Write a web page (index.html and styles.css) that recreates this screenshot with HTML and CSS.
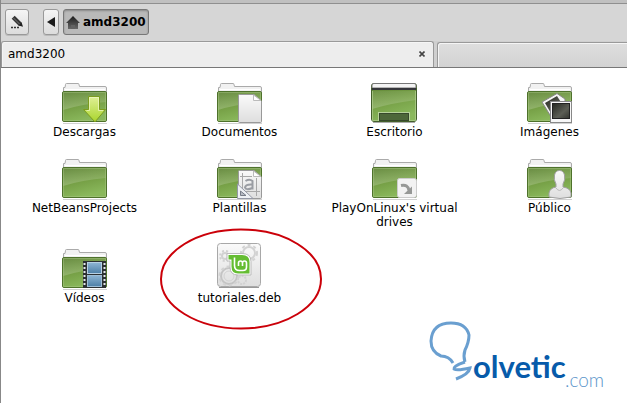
FILE: index.html
```html
<!DOCTYPE html>
<html lang="es">
<head>
<meta charset="utf-8">
<title>amd3200</title>
<link rel="stylesheet" href="styles.css">
</head>
<body>
<svg class="defs" aria-hidden="true">
  <defs>
    <linearGradient id="green" x1="0" y1="0" x2="0.35" y2="1"><stop offset="0" stop-color="#5f8436"/><stop offset="0.55" stop-color="#76a046"/><stop offset="1" stop-color="#8ab85c"/></linearGradient>
    <linearGradient id="shine" x1="0" y1="0" x2="0" y2="1"><stop offset="0" stop-color="#fff" stop-opacity="0.06"/><stop offset="1" stop-color="#fff" stop-opacity="0.2"/></linearGradient>
    <linearGradient id="paper" x1="0" y1="0" x2="0" y2="1"><stop offset="0" stop-color="#fafafa"/><stop offset="1" stop-color="#dedede"/></linearGradient>
    <linearGradient id="arrow" x1="0" y1="0" x2="0" y2="1"><stop offset="0" stop-color="#e0f096"/><stop offset="1" stop-color="#a9d52c"/></linearGradient>
    <linearGradient id="photo" x1="0" y1="0" x2="1" y2="1"><stop offset="0" stop-color="#242620"/><stop offset="0.6" stop-color="#5c5e55"/><stop offset="1" stop-color="#33352f"/></linearGradient>
    <linearGradient id="frame" x1="0" y1="0" x2="0" y2="1"><stop offset="0" stop-color="#8eb5d4"/><stop offset="1" stop-color="#4d7fa6"/></linearGradient>
    <linearGradient id="roof" x1="0" y1="0" x2="0" y2="1"><stop offset="0" stop-color="#1c1c1c"/><stop offset="1" stop-color="#686868"/></linearGradient>
    <symbol id="folder" viewBox="0 0 48 46">
      <path d="M2 44.500h44" stroke="#000" stroke-opacity="0.18"/>
      <path d="M2.500 16V8.500h1.500L4.500 5.500q0-1 1-1H17q1 0 1 1l.5 2H44q1.500 0 1.500 1.500V16z" fill="#f1f1f1" stroke="#aaa"/>
      <path d="M4 10.500h40" stroke="#fff"/>
      <rect x="1.500" y="12.500" width="44" height="30" rx="1.500" fill="url(#green)" stroke="#4e722b"/>
      <path d="M2 13h43v10Q21 25 2 31z" fill="url(#shine)"/>
      <rect x="2.500" y="13.500" width="42" height="28" fill="none" stroke="#b2ce92" stroke-opacity="0.4"/>
    </symbol>
  </defs>
</svg>
<div class="window">
  <header class="toolbar">
    <button class="btn edit" aria-label="Editar ubicación">
      <svg width="14" height="16" viewBox="0 0 14 16"><path d="M3.200 3.200L10.500 10.500" stroke="#333" stroke-width="4.200"/><path d="M3.500 4L10 10.500" stroke="#777" stroke-width="1"/><path d="M8.500 11.500L13 12.800 11.600 8.500z" fill="#222"/><path d="M1 13.500h2m1 0h2m1 0h2" stroke="#333" stroke-width="1.500"/></svg>
    </button>
    <button class="btn back" aria-label="Atrás">
      <svg width="8" height="10" viewBox="0 0 8 10"><path d="M8 0v10L0 5z" fill="#1c1c1c"/></svg>
    </button>
    <button class="btn crumb">
      <svg width="14" height="13" viewBox="0 0 14 13"><path d="M7 0L14 7h-2v6H8.500V9h-3v4H2V7H0z" fill="url(#roof)"/><path d="M5 9h4v4H5z" fill="#626262"/></svg>
      <span>amd3200</span>
    </button>
  </header>
  <nav class="tabs">
    <div class="tab active"><span>amd3200</span><button class="close" aria-label="Cerrar"><svg width="6" height="6" viewBox="0 0 6 6"><path d="M.5.500l5 5m0-5l-5 5" stroke="#444" stroke-width="1.600"/></svg></button></div>
    <div class="tab"></div>
  </nav>
  <main class="files">
    <figure class="item">
      <svg class="icon" viewBox="0 0 48 46"><use href="#folder"/><path d="M27.500 17.500h11v13h6L34 43 22.500 30.500h5z" fill="url(#arrow)" stroke="#7c9c1e"/><path d="M25.500 31.500h3v-13h9v13h4.500" fill="none" stroke="#f0f8c8" stroke-opacity="0.7"/></svg>
      <figcaption>Descargas</figcaption>
    </figure>
    <figure class="item">
      <svg class="icon" viewBox="0 0 48 46"><use href="#folder"/><path d="M22.500 16.500q0-1 1-1H38L45.500 22v20.500q0 1-1 1h-21q-1 0-1-1z" fill="url(#paper)" stroke="#999"/><path d="M37.500 16v5.500H45z" fill="#fff" stroke="#bbb"/></svg>
      <figcaption>Documentos</figcaption>
    </figure>
    <figure class="item">
      <svg class="icon" viewBox="1 0 48 46"><path d="M3 43.500h42" stroke="#aaa"/><rect x="1.500" y="4.500" width="45" height="38" rx="2.500" fill="url(#green)" stroke="#44602c"/><path d="M2 9V6q0-1.500 2-1.500h40q2 0 2 1.500v3z" fill="#f4f4f4" stroke="#777"/><path d="M2 10h44" stroke="#35363a" stroke-width="2"/><path d="M2 12h44v9Q22 24 2 30z" fill="url(#shine)"/><path d="M2.500 12v29.500h43V12" fill="none" stroke="#b2ce92" stroke-opacity="0.7"/><rect x="8.500" y="33.500" width="31" height="8" fill="#4d673a" stroke="#b7d29a"/><rect x="9.500" y="34.500" width="29" height="7" fill="none" stroke="#37492c"/></svg>
      <figcaption>Escritorio</figcaption>
    </figure>
    <figure class="item">
      <svg class="icon" viewBox="0 0 48 46"><use href="#folder"/><path d="M16 23L31 14.500 39 20v21H27z" fill="#f6f6f6" stroke="#888"/><path d="M19 24L31 17l7 11-12 8z" fill="url(#photo)"/><rect x="24.500" y="22.500" width="21" height="21" fill="#f7f7f7" stroke="#888"/><rect x="26.500" y="24.500" width="17" height="15" fill="url(#photo)" stroke="#222"/></svg>
      <figcaption>Imágenes</figcaption>
    </figure>
    <figure class="item">
      <svg class="icon" viewBox="0 0 48 46"><use href="#folder"/></svg>
      <figcaption>NetBeansProjects</figcaption>
    </figure>
    <figure class="item">
      <svg class="icon" viewBox="0 0 48 46"><use href="#folder"/><path d="M22.500 16.500q0-1 1-1H38L45.500 22v20.500q0 1-1 1h-21q-1 0-1-1z" fill="url(#paper)" stroke="#999"/><path d="M37.500 16v5.500H45z" fill="#fff" stroke="#bbb"/><path d="M26.500 18v21M40.500 23v18M24 21.500h12M27 36.500h17" stroke="#a8a8a8"/><path d="M29.500 26q4-2.500 7 0v8.500M36.500 29.500q-7-.5-7.500 3 1 3 7.500.5" fill="none" stroke="#9a9da3" stroke-width="2"/><path d="M21.500 29v14.500H37z" fill="#eef0f4" stroke="#9498a5"/><path d="M24.500 36v4.500H30z" fill="#b8bcc5" stroke="#777c88"/></svg>
      <figcaption>Plantillas</figcaption>
    </figure>
    <figure class="item">
      <svg class="icon" viewBox="0 0 48 46"><use href="#folder"/><rect x="26.500" y="23.500" width="19" height="19" rx="2" fill="#f2f2f2" stroke="#ccc"/><path d="M30 30.500Q37 29 38 35.500" fill="none" stroke="#969896" stroke-width="3"/><path d="M41 31.500V39H33z" fill="#969896"/></svg>
      <figcaption>PlayOnLinux's virtual drives</figcaption>
    </figure>
    <figure class="item">
      <svg class="icon" viewBox="0 0 48 46"><use href="#folder"/><path d="M30 29Q27.500 25 28.500 20q1-4.500 5-4.500t5 4.500q1 5-1.500 9v3q7 1 8 6v4q-11 3-22 0v-4q1-5 7-6z" fill="url(#paper)" stroke="#a0a0a0"/><path d="M30 33q3.500 5 7 0" fill="none" stroke="#bbb"/></svg>
      <figcaption>Público</figcaption>
    </figure>
    <figure class="item">
      <svg class="icon" viewBox="0 0 48 46"><use href="#folder"/><rect x="22" y="16" width="23" height="27" fill="#2b3033"/><path d="M23.500 18v24M43.500 18v24" stroke="#e4e8ea" stroke-width="2" stroke-dasharray="2 2"/><rect x="26.500" y="17.500" width="14" height="11" fill="url(#frame)" stroke="#b7d0e3"/><rect x="26.500" y="30.500" width="14" height="11" fill="url(#frame)" stroke="#9dbdd5"/></svg>
      <figcaption>Vídeos</figcaption>
    </figure>
    <figure class="item marked">
      <svg class="icon" viewBox="1 2 48 46"><rect x="2.500" y="0.500" width="43" height="43" rx="3" fill="url(#paper)" stroke="#a8a8a8"/><path d="M4 44.500h40" stroke="#999"/>
        <g fill="none" stroke="#d2d2d2"><circle cx="34" cy="10" r="6" stroke-width="2"/><circle cx="34" cy="10" r="8" stroke-width="2" stroke-dasharray="3 3"/><circle cx="10" cy="13" r="3" stroke-width="2"/><circle cx="10" cy="13" r="5" stroke-width="2" stroke-dasharray="2 2"/><circle cx="14" cy="33" r="8" stroke="#c4c4c4" stroke-width="2"/><circle cx="14" cy="33" r="9.500" stroke-width="2" stroke-dasharray="3 3"/><circle cx="14" cy="33" r="5"/><circle cx="27" cy="37" r="4" stroke-width="2" stroke-dasharray="2 1"/></g>
        <path d="M12 10.500h15q9 0 9 8V32H23q-8 0-8-8v-6h-3z" fill="#fff" stroke="#bbb"/><path d="M13.500 12H27q7.500 0 7.500 7v11.500H23q-6.500 0-6.500-7v-7h-3z" fill="#65bd32"/><path d="M19.500 14.500v8q0 5 5 5h3.500q3.500 0 3.500-3.500v-4q0-2-2-2t-2 2v3m0-3q0-2-2-2t-2 2v3" fill="none" stroke="#fff" stroke-width="1.600"/></svg>
      <figcaption>tutoriales.deb</figcaption>
      <svg class="mark" viewBox="0 0 164 102" aria-hidden="true"><ellipse cx="82" cy="51" rx="80" ry="49.500" fill="none" stroke="#cb0009" stroke-width="2"/></svg>
    </figure>
  </main>
  <svg class="brand" viewBox="0 0 190 76" role="img" aria-label="Solvetic.com">
    <path d="M24 42Q20 35 12 35 2 31 2 20 3 2 22 2 37 2 40 14 40 21 36 29 34 35 36 41" fill="none" stroke="#6a9fd0" stroke-width="3"/>
    <path d="M36 41Q24 45 25 48 28 50 41 47 40 53 27 58" fill="none" stroke="#6a9fd0" stroke-width="3"/>
    <text class="brand-name" x="44" y="57">olvetic</text>
    <text class="brand-tld" x="136" y="66">.com</text>
  </svg>
</div>
</body>
</html>
```
FILE: styles.css
```css
* { box-sizing: border-box; }
body {
  margin: 0;
  font: 12px/14px "DejaVu Sans", sans-serif;
  color: #000;
  background: #fff;
}
.defs { position: absolute; width: 0; height: 0; }
.window {
  position: relative;
  display: flex;
  flex-direction: column;
  min-height: 100vh;
  border-left: 1px solid #888;
}
.toolbar {
  display: flex;
  align-items: flex-start;
  padding: 5px 4px;
  height: 38px;
  background: #d6d6d6;
  border-top: 1px solid #8f8f8f;
  box-shadow: 0 -3px #c0c0c0;
  margin-top: 3px;
}
.btn {
  display: flex;
  align-items: center;
  justify-content: center;
  height: 26px;
  padding: 0;
  font: inherit;
  border: 1px solid #999;
  border-radius: 3px;
  background: linear-gradient(#f5f5f5, #dcdcdc);
  box-shadow: 0 1px #bbb;
}
.edit { width: 24px; }
.back { width: 16px; margin-left: 14px; }
.crumb {
  gap: 3px;
  margin-left: 4px;
  padding: 0 2px;
  font-weight: bold;
  border-color: #777;
  background: #b9b9b9;
  box-shadow: inset 0 1px 2px #888;
}
.tabs {
  display: grid;
  grid-template-columns: 16fr 7fr;
  gap: 3px;
  height: 27px;
  background: #cfcfcf;
  border-bottom: 1px solid #777;
}
.tab {
  border: 1px solid #999;
  border-right: 0;
  border-bottom: 0;
  border-radius: 3px 0 0 0;
  background: linear-gradient(#dedede, #d2d2d2);
  box-shadow: inset 1px 1px #f5f5f5;
  margin-top: 1px;
}
.tab.active {
  display: flex;
  align-items: center;
  justify-content: space-between;
  margin-top: 0;
  padding: 0 8px 2px 6px;
  border-right: 1px solid #999;
  border-radius: 3px 3px 0 0;
  background: #ededed;
}
.close { display: flex; padding: 0; border: 0; background: none; }
.files {
  display: grid;
  grid-template-columns: repeat(4, 1fr);
  row-gap: 16px;
  padding: 11px 0 0 6px;
}
.item {
  position: relative;
  display: flex;
  flex-direction: column;
  align-items: center;
  margin: 0;
  text-align: center;
}
.icon { width: 48px; height: 46px; overflow: visible; }
.item figcaption { max-width: 132px; }
.mark {
  position: absolute;
  top: -17px;
  left: 50%;
  width: 164px;
  margin-left: -81px;
}
.brand {
  position: absolute;
  right: 8px;
  bottom: 6px;
  width: 190px;
}
.brand-name { font: bold 31px Lato, sans-serif; fill: #075baa; }
.brand-tld { font: 300 19px Lato, sans-serif; fill: #5b95ca; }
```
